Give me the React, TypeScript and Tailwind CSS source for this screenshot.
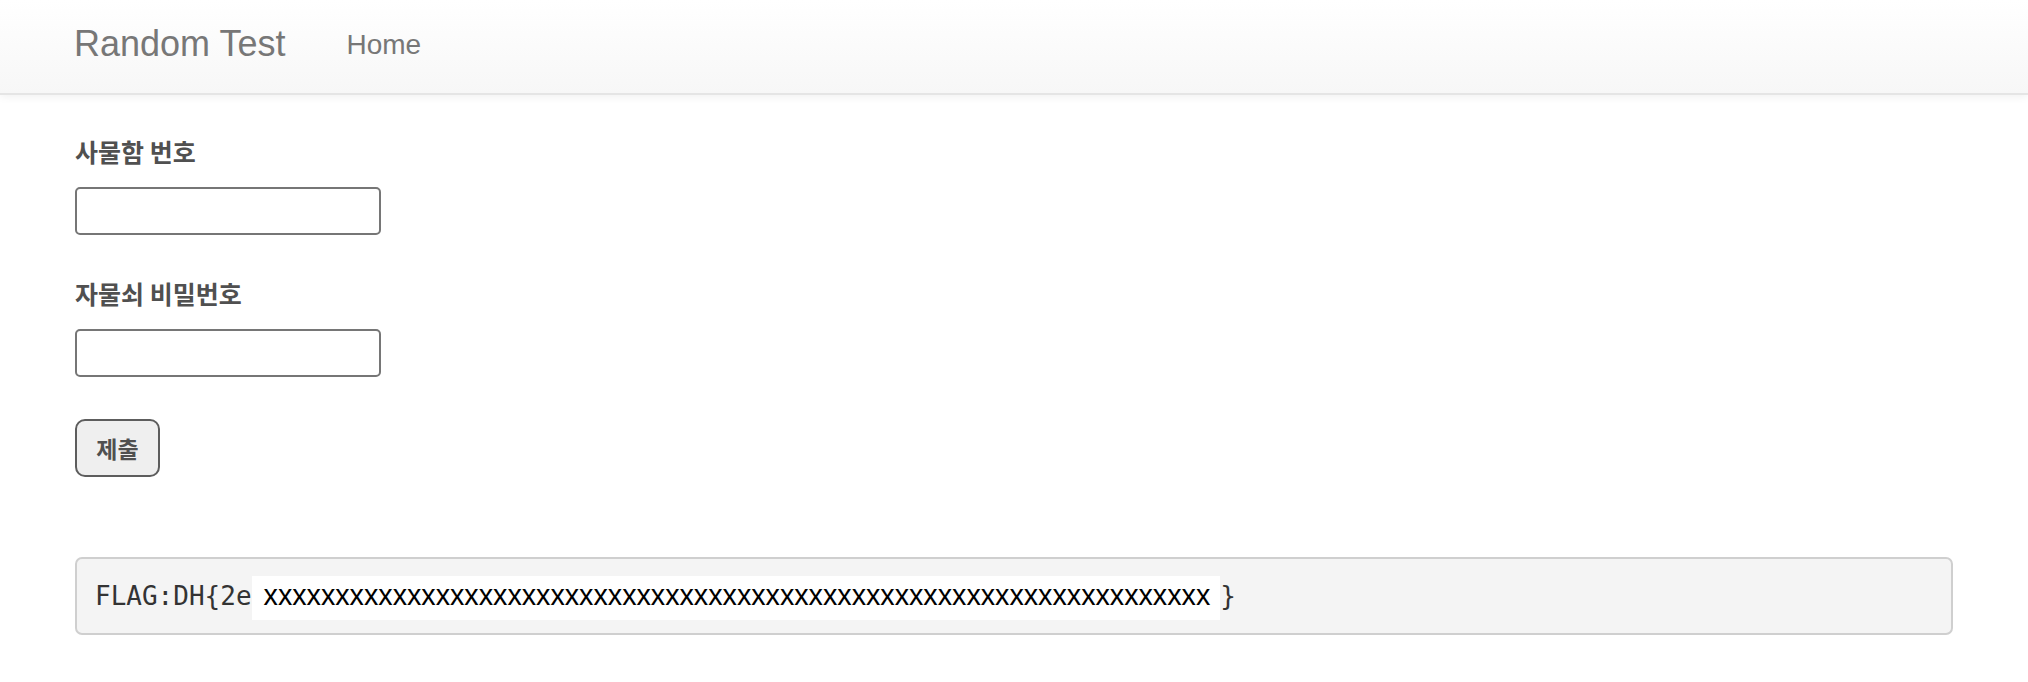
import { useState } from 'react'

const HIDDEN = 'x'.repeat(66)

export default function App() {
  const [locker, setLocker] = useState('')
  const [password, setPassword] = useState('')

  return (
    <div className="min-h-[682px] bg-white font-['Liberation_Sans','Noto_Sans_CJK_KR',sans-serif] text-[#333]">
      {/* Navbar */}
      <nav className="h-[95px] border-b-2 border-[#e5e5e5] bg-gradient-to-b from-white to-[#f7f7f7] shadow-[0_2px_8px_rgba(0,0,0,0.06)]">
        <div className="flex items-start px-[74px]">
          <a className="mt-[24px] text-[36px] leading-[39px] text-[#777]">Random Test</a>
          <a className="ml-[61px] mt-[29px] text-[28px] leading-[32px] text-[#777]">Home</a>
        </div>
      </nav>

      <div className="px-[75px] pt-[38px]">
        <form onSubmit={e => e.preventDefault()}>
          <div className="mb-[40px]">
            <label className="mb-[17px] block text-[25px] font-bold leading-[37px] text-[#505050] font-['Noto_Sans_CJK_KR',sans-serif]">
              사물함 번호
            </label>
            <input
              type="text"
              value={locker}
              onChange={e => setLocker(e.target.value)}
              className="block h-[48px] w-[306px] rounded-[5px] border-2 border-[#767676] bg-white px-2 text-[24px] outline-none"
            />
          </div>
          <div className="mb-[42px]">
            <label className="mb-[17px] block text-[25px] font-bold leading-[37px] text-[#505050] font-['Noto_Sans_CJK_KR',sans-serif]">
              자물쇠 비밀번호
            </label>
            <input
              type="password"
              value={password}
              onChange={e => setPassword(e.target.value)}
              className="block h-[48px] w-[306px] rounded-[5px] border-2 border-[#767676] bg-white px-2 text-[24px] outline-none"
            />
          </div>
          <button
            type="submit"
            className="flex h-[58px] w-[85px] items-center justify-center rounded-[10px] border-2 border-[#5d5d5d] bg-[#efefef] text-[23px] font-bold text-[#505050] font-['Noto_Sans_CJK_KR',sans-serif]"
          >
            제출
          </button>
        </form>

        {/* Flag */}
        <div className="mt-[80px] flex h-[78px] items-start rounded-[7px] border-2 border-[#cfcfcf] bg-[#f4f4f4] px-[18px] pt-[17px]">
          <span className="font-['DejaVu_Sans_Mono',monospace] text-[26px] leading-[40px] text-[#333]">FLAG:DH{'{'}2e</span>
          <span className="inline-block h-[44px] bg-white pl-[12px] pr-[10px] text-[28.7px] leading-[39px] text-black font-['Liberation_Sans',sans-serif]">
            {HIDDEN}
          </span>
          <span className="font-['DejaVu_Sans_Mono',monospace] text-[26px] leading-[40px] text-[#333]">{'}'}</span>
        </div>
      </div>
    </div>
  )
}
